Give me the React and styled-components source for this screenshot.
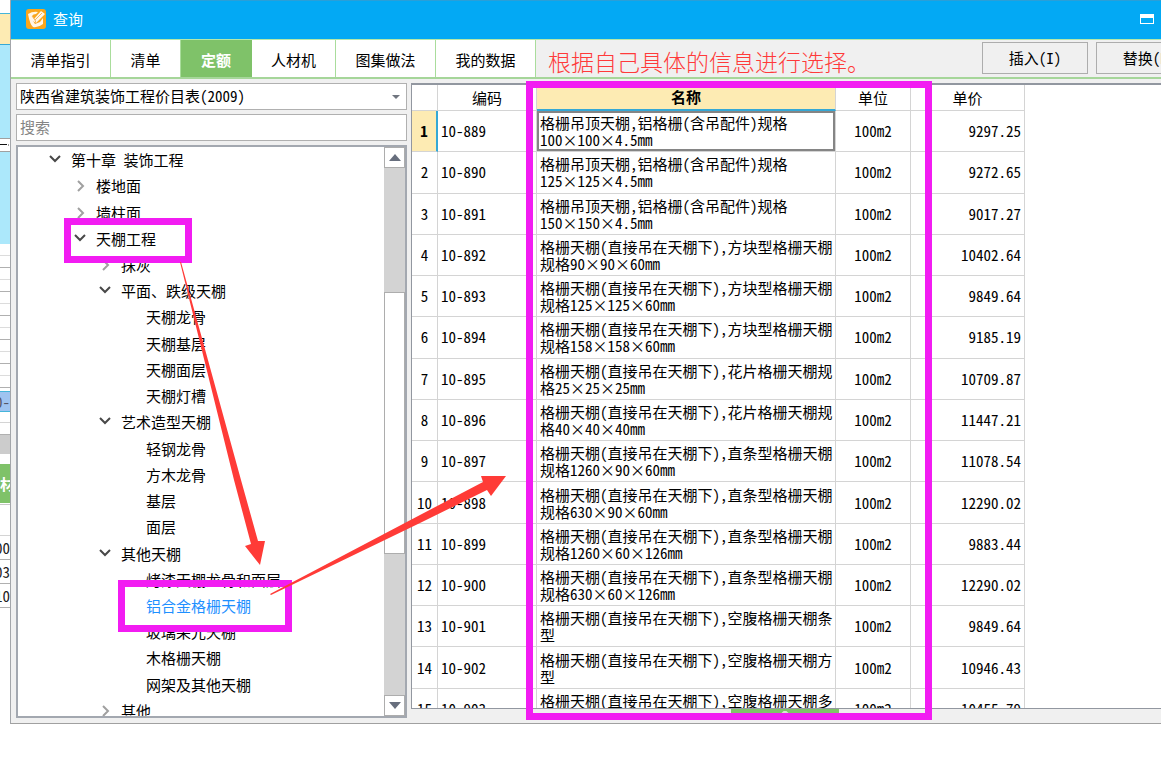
import React from "react";
import styled, { createGlobalStyle, css } from "styled-components";

const GlobalStyle = createGlobalStyle`
  * { box-sizing: border-box; }
  body {
    margin: 0;
    background: #fff;
    color: #000;
    overflow: hidden;
    font-family: "Noto Sans Mono CJK SC", "Noto Sans CJK SC", "Liberation Sans", sans-serif;
    font-size: 15px;
    line-height: 20px;
  }
  button, input, select { font: inherit; color: inherit; margin: 0; }
`;

const Page = styled.div`
  display: flex;
  align-items: flex-start;
  height: 100vh;
  overflow: hidden;
`;

/* Slice of the main program that shows to the left of the dialog */
const Backdrop = styled.aside`
  flex: 0 0 10px;
  display: flex;
  flex-direction: column;
  overflow: hidden;
`;

const Strip = styled.div`
  flex: 0 0 ${(p) => p.$h}px;
  display: flex;
  align-items: center;
  justify-content: ${(p) => (p.$end ? "flex-end" : "flex-start")};
  background: ${(p) => p.$bg || "#fff"};
  border-bottom: ${(p) => (p.$line ? `1px solid ${p.$line}` : "0")};
  color: ${(p) => p.$color || "#222"};
  font-weight: ${(p) => (p.$bold ? 700 : 400)};
  white-space: nowrap;
  overflow: hidden;
`;

const Dialog = styled.main`
  position: relative;
  flex: 0 0 calc(100% + 39px);
  height: calc(100vh - 42px);
  display: flex;
  flex-direction: column;
  background: #f0f0f0;
  border-left: 1px solid #a3a6aa;
  border-bottom: 1px solid #a0a0a0;
`;

const TitleBar = styled.header`
  flex: 0 0 39px;
  display: flex;
  align-items: center;
  gap: 7px;
  padding: 0 56px 2px 15px;
  background: #03a9f4;
  border-top: 1px solid #2a9fd8;
  color: #fff;
`;

const Title = styled.h1`
  margin: 0;
  flex: 1;
  font-size: 15px;
  font-weight: 400;
`;

const WindowButton = styled.button`
  display: flex;
  padding: 0;
  border: 0;
  background: none;
`;

const Toolbar = styled.div`
  flex: 0 0 40px;
  display: flex;
  align-items: stretch;
  border-top: 1px solid #b5e8a8;
  border-bottom: 2px solid #a6d69a;
  padding-right: 8px;
`;

const Tab = styled.button`
  width: ${(p) => p.$w}px;
  padding: 2px 0 0;
  border: 0;
  border-right: 1px solid #a9dd9c;
  background: #fff;
  white-space: nowrap;
  ${(p) =>
    p.$active &&
    css`
      background: #7fc269;
      border-color: #7fc269;
      color: #fff;
      font-weight: 700;
    `}
`;

const Note = styled.p`
  margin: 0 0 0 12px;
  flex: 1;
  padding-top: 6px;
  font-family: "Noto Sans CJK SC", sans-serif;
  font-size: 23px;
  font-weight: 300;
  line-height: 30px;
  color: #ff3a3a;
  white-space: nowrap;
`;

const Actions = styled.div`
  display: flex;
  gap: 8px;
  padding: 2px 0 3px;
`;

const ActionButton = styled.button`
  width: 106px;
  padding: 0;
  border: 1px solid #adadad;
  background: #f0f0f0;
`;

const Body = styled.div`
  flex: 1;
  min-height: 0;
  display: grid;
  grid-template-columns: 391px minmax(0, 1fr);
  gap: 4px;
  padding: 4px 0 0 5px;
`;

const Side = styled.section`
  display: flex;
  flex-direction: column;
  gap: 4px;
  min-height: 0;
  padding-bottom: 5px;
`;

const PickerBox = styled.label`
  flex: 0 0 27px;
  display: flex;
  align-items: center;
  padding-right: 6px;
  background: #fff;
  border: 1px solid #b0b0b0;
`;

const Picker = styled.select`
  flex: 1;
  appearance: none;
  border: 0;
  padding: 0 3px 2px;
  background: transparent;
  outline: 0;
`;

const Search = styled.input`
  flex: 0 0 27px;
  width: 100%;
  padding: 0 3px 2px;
  border: 1px solid #b0b0b0;
  background: #fff;
  &::placeholder { color: #858585; opacity: 1; }
`;

const TreePanel = styled.div`
  flex: 1;
  min-height: 0;
  display: flex;
  background: #fff;
  border: 2px solid #a3a8b0;
  overflow: hidden;
`;

const Tree = styled.ul`
  flex: 1;
  height: 577px;
  margin: 0;
  padding: 0;
  list-style: none;
  display: grid;
  grid-auto-rows: 1fr;
`;

const TreeItem = styled.li`
  display: flex;
  align-items: center;
  gap: 9px;
  padding-left: ${(p) => 29 + p.$level * 25}px;
  color: ${(p) => (p.$current ? "#1e90ff" : "#000")};
  white-space: nowrap;
`;

const Toggle = styled.svg`
  flex: 0 0 15px;
  height: 14px;
  fill: none;
  stroke: ${(p) => (p.$open ? "#484848" : "#a0a0a0")};
  stroke-width: 2;
`;

const ScrollBar = styled.div`
  flex: 0 0 21px;
  display: flex;
  flex-direction: column;
  background: #d3d3d3;
`;

const ScrollButton = styled.button`
  flex: 0 0 21px;
  display: flex;
  align-items: center;
  justify-content: center;
  padding: 0;
  border: 1px solid #adadad;
  background: #fff;
`;

const ScrollTrack = styled.div`
  flex: 1;
  display: flex;
  flex-direction: column;
  padding-top: 124px;
`;

const ScrollThumb = styled.div`
  height: 65%;
  background: #fff;
  border: 1px solid #adadad;
`;

const Content = styled.section`
  display: flex;
  flex-direction: column;
  min-height: 0;
`;

const TablePanel = styled.div`
  flex: 1;
  min-height: 0;
  overflow: hidden;
  background: #fff;
  border: 0 solid #9297a0;
  border-width: 2px 0 1px 1px;
`;

const Table = styled.table`
  width: 613px;
  height: 645px;
  table-layout: fixed;
  border-collapse: separate;
  border-spacing: 0;
`;

const Col = styled.col`
  width: ${(p) => p.$w}px;
`;

const HeadCell = styled.th`
  height: 26px;
  padding: 0;
  border-right: 1px solid #d4d4d4;
  border-bottom: 1px solid #d4d4d4;
  font-weight: 400;
  ${(p) =>
    p.$current &&
    css`
      background: #fdebb3;
      border-bottom: 2px solid #35a8d5;
      font-weight: 700;
    `}
`;

const Cell = styled.td`
  height: 41px;
  padding: 0 3px;
  border-right: 1px solid #d4d4d4;
  border-bottom: 1px solid #d4d4d4;
  text-align: ${(p) => p.$align || "left"};
  white-space: pre;
  overflow: hidden;
`;

const IndexCell = styled(Cell)`
  padding: 0;
  text-align: center;
  ${(p) =>
    p.$current &&
    css`
      background: #fdebb3;
      border-right: 2px solid #35a8d5;
      font-weight: 700;
    `}
`;

const NameCell = styled(Cell)`
  line-height: 17px;
  ${(p) => p.$current && css`box-shadow: inset 0 0 0 2px #858585;`}
`;

const Footer = styled.div`
  flex: 0 0 14px;
  padding-left: 320px;
`;

const Handle = styled.button`
  display: block;
  width: 108px;
  height: 5px;
  padding: 0;
  border: 0;
  background: #7fc269;
  line-height: 0;
`;

/* Hand-drawn markers that lie over the dialog */
const Marker = styled.div`
  position: absolute;
  left: ${(p) => p.$x}px;
  top: ${(p) => p.$y}px;
  width: ${(p) => p.$w}px;
  height: ${(p) => p.$h}px;
  border: 7px solid #f21cf2;
  pointer-events: none;
`;

const Arrows = styled.svg`
  position: absolute;
  left: 0;
  top: 0;
  width: 600px;
  height: 640px;
  fill: #ff3b37;
  pointer-events: none;
`;

const tabs = [
  ["清单指引", 100],
  ["清单", 70],
  ["定额", 71],
  ["人材机", 84],
  ["图集做法", 100],
  ["我的数据", 100],
];

const tree = [
  ["第十章 装饰工程", 0, "open"],
  ["楼地面", 1, "closed"],
  ["墙柱面", 1, "closed"],
  ["天棚工程", 1, "open"],
  ["抹灰", 2, "closed"],
  ["平面、跌级天棚", 2, "open"],
  ["天棚龙骨", 3],
  ["天棚基层", 3],
  ["天棚面层", 3],
  ["天棚灯槽", 3],
  ["艺术造型天棚", 2, "open"],
  ["轻钢龙骨", 3],
  ["方木龙骨", 3],
  ["基层", 3],
  ["面层", 3],
  ["其他天棚", 2, "open"],
  ["烤漆天棚龙骨和面层", 3],
  ["铝合金格栅天棚", 3, "current"],
  ["玻璃采光天棚", 3],
  ["木格栅天棚", 3],
  ["网架及其他天棚", 3],
  ["其他", 2, "closed"],
];

const rows = [
  ["10-889", "格栅吊顶天棚,铝格栅(含吊配件)规格\n100×100×4.5mm", "9297.25"],
  ["10-890", "格栅吊顶天棚,铝格栅(含吊配件)规格\n125×125×4.5mm", "9272.65"],
  ["10-891", "格栅吊顶天棚,铝格栅(含吊配件)规格\n150×150×4.5mm", "9017.27"],
  ["10-892", "格栅天棚(直接吊在天棚下),方块型格栅天棚\n规格90×90×60mm", "10402.64"],
  ["10-893", "格栅天棚(直接吊在天棚下),方块型格栅天棚\n规格125×125×60mm", "9849.64"],
  ["10-894", "格栅天棚(直接吊在天棚下),方块型格栅天棚\n规格158×158×60mm", "9185.19"],
  ["10-895", "格栅天棚(直接吊在天棚下),花片格栅天棚规\n格25×25×25mm", "10709.87"],
  ["10-896", "格栅天棚(直接吊在天棚下),花片格栅天棚规\n格40×40×40mm", "11447.21"],
  ["10-897", "格栅天棚(直接吊在天棚下),直条型格栅天棚\n规格1260×90×60mm", "11078.54"],
  ["10-898", "格栅天棚(直接吊在天棚下),直条型格栅天棚\n规格630×90×60mm", "12290.02"],
  ["10-899", "格栅天棚(直接吊在天棚下),直条型格栅天棚\n规格1260×60×126mm", "9883.44"],
  ["10-900", "格栅天棚(直接吊在天棚下),直条型格栅天棚\n规格630×60×126mm", "12290.02"],
  ["10-901", "格栅天棚(直接吊在天棚下),空腹格栅天棚条\n型", "9849.64"],
  ["10-902", "格栅天棚(直接吊在天棚下),空腹格栅天棚方\n型", "10946.43"],
  ["10-903", "格栅天棚(直接吊在天棚下),空腹格栅天棚多\n边型", "10455.79"],
];

const gridStrips = Array.from({ length: 12 }, (_, i) => i);

function Logo() {
  return (
    <svg width="20" height="20" viewBox="0 0 20 20" aria-hidden="true">
      <rect width="20" height="20" rx="3" fill="#f9a61c" />
      <path d="M2 5Q7 2 12 3L10 5Q7 5 6 7L8 10L15 2L19 5L10 14L7 12L9 15L14 13L17 9L17 15Q12 19 7 18Q4 16 2 5Z" fill="#fff6e8" />
      <path d="M6 7L9 11L10 14M9 11L16 4" fill="none" stroke="#f7b65a" strokeWidth="1" />
    </svg>
  );
}

function BackdropSlice() {
  return (
    <Backdrop aria-hidden="true">
      <Strip $h={14} $line="#45b5da" />
      <Strip $h={31} $bg="#fdebb3" $line="#35a8d5" />
      <Strip $h={94} $bg="#ace8fb" $line="#a0a0a0" />
      <Strip $h={13} $line="#a0a0a0">
        <svg width="9" height="2"><rect width="7" height="1" fill="#111" /><rect x="8" width="1" height="2" fill="#a0a0a0" /></svg>
      </Strip>
      <Strip $h={92} $bg="#ace8fb" />
      {gridStrips.map((i) => (
        <Strip key={i} $h={12} $line={i % 2 ? "#b0b0b0" : "#dcdcdc"} />
      ))}
      <Strip $h={4} $line="#45b5da" />
      <Strip $h={20} $bg="#9fc3f0" $line="#45b5da" $color="#556" $end>0-</Strip>
      <Strip $h={11} $line="#d4d4d4" />
      <Strip $h={12} $line="#b0b0b0" />
      <Strip $h={19} $bg="#cccccc" />
      <Strip $h={10} />
      <Strip $h={39} $bg="#7fc269" $color="#fff" $bold>材</Strip>
      <Strip $h={2} $line="#c8c8c8" />
      <Strip $h={31} $line="#d4d4d4" />
      <Strip $h={24} $line="#b0b0b0" $end>00</Strip>
      <Strip $h={24} $line="#b0b0b0" $end>03</Strip>
      <Strip $h={24} $line="#b0b0b0" $end>10</Strip>
    </Backdrop>
  );
}

export default function App() {
  return (
    <Page>
      <GlobalStyle />
      <BackdropSlice />
      <Dialog>
        <TitleBar>
          <Logo />
          <Title>查询</Title>
          <WindowButton aria-label="最小化">
            <svg width="14" height="10" viewBox="0 0 14 10">
              <rect width="14" height="10" fill="#fff" />
              <rect x="1" y="4" width="12" height="5" fill="#03a9f4" />
            </svg>
          </WindowButton>
        </TitleBar>

        <Toolbar>
          {tabs.map(([label, w]) => (
            <Tab key={label} $w={w} $active={label === "定额"}>{label}</Tab>
          ))}
          <Note>根据自己具体的信息进行选择。</Note>
          <Actions>
            <ActionButton>插入(I)</ActionButton>
            <ActionButton>替换(R)</ActionButton>
          </Actions>
        </Toolbar>

        <Body>
          <Side>
            <PickerBox>
              <Picker aria-label="定额库">
                <option>陕西省建筑装饰工程价目表(2009)</option>
              </Picker>
              <svg width="8" height="4" viewBox="0 0 8 4">
                <path d="M0 0H8L4 4Z" fill="#70757f" />
              </svg>
            </PickerBox>
            <Search type="text" placeholder="搜索" aria-label="搜索" />
            <TreePanel>
              <Tree>
                {tree.map(([label, level, state]) => (
                  <TreeItem key={level + label} $level={level} $current={state === "current"}>
                    <Toggle viewBox="0 0 15 14" $open={state === "open"} aria-hidden="true">
                      {state === "open" && <path d="M3 3L8 8L13 3" />}
                      {state === "closed" && <path d="M6 2L11 7L6 12" />}
                    </Toggle>
                    {label}
                  </TreeItem>
                ))}
              </Tree>
              <ScrollBar>
                <ScrollButton aria-label="向上滚动">
                  <svg width="12" height="7"><path d="M0 7L6 0L12 7Z" fill="#676e7d" /></svg>
                </ScrollButton>
                <ScrollTrack>
                  <ScrollThumb />
                </ScrollTrack>
                <ScrollButton aria-label="向下滚动">
                  <svg width="12" height="7"><path d="M0 0L6 7L12 0Z" fill="#676e7d" /></svg>
                </ScrollButton>
              </ScrollBar>
            </TreePanel>
          </Side>

          <Content>
            <TablePanel>
              <Table>
                <colgroup>
                  <Col $w={26} />
                  <Col $w={99} />
                  <Col $w={299} />
                  <Col $w={75} />
                  <Col $w={114} />
                </colgroup>
                <thead>
                  <tr>
                    <HeadCell aria-label="序号" />
                    <HeadCell>编码</HeadCell>
                    <HeadCell $current>名称</HeadCell>
                    <HeadCell>单位</HeadCell>
                    <HeadCell>单价</HeadCell>
                  </tr>
                </thead>
                <tbody>
                  {rows.map(([code, name, price], i) => (
                    <tr key={code}>
                      <IndexCell $current={i === 0}>{i + 1}</IndexCell>
                      <Cell>{code}</Cell>
                      <NameCell $current={i === 0}>{name}</NameCell>
                      <Cell $align="center">100m2</Cell>
                      <Cell $align="right">{price}</Cell>
                    </tr>
                  ))}
                </tbody>
              </Table>
            </TablePanel>
            <Footer>
              <Handle aria-label="展开">
                <svg width="8" height="4"><path d="M0 4L4 0L8 4" fill="none" stroke="#d5ecce" strokeWidth="2" /></svg>
              </Handle>
            </Footer>
          </Content>
        </Body>

        <Marker $x={53} $y={218} $w={128} $h={45} />
        <Marker $x={107} $y={580} $w={174} $h={52} />
        <Marker $x={515} $y={81} $w={406} $h={639} />
        <Arrows viewBox="11 0 600 640" aria-hidden="true">
          <path d="M180 262L181 262L241 480L258 541L265 541L260 565L245 546L251 544L234 480Z" />
          <path d="M270 594L420 515L483 482L481 476L506 476L491 496L487 490L420 523L271 595Z" />
        </Arrows>
      </Dialog>
    </Page>
  );
}
